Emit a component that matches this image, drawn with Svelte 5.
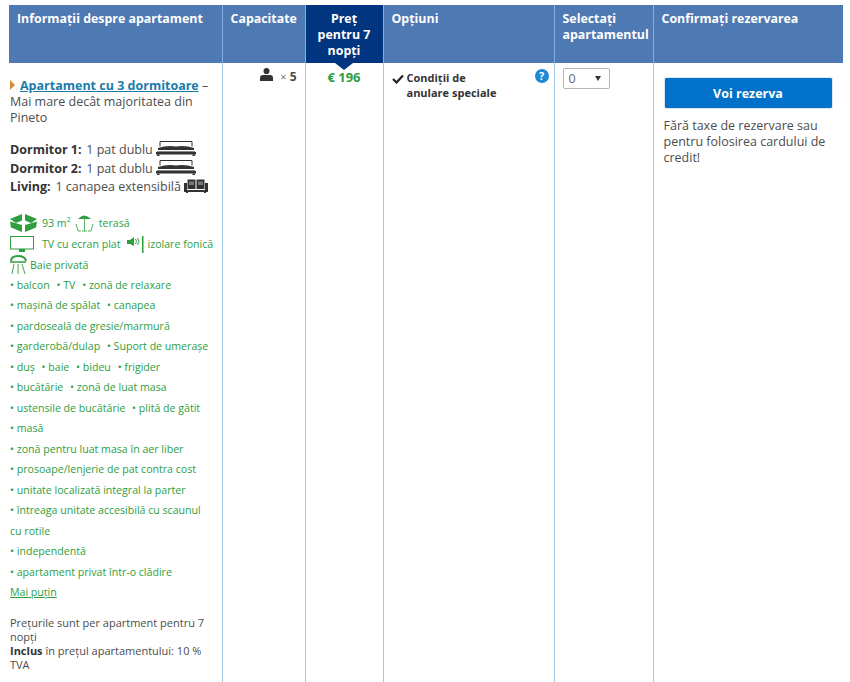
<script lang="ts">
    const headers = [
        { label: 'Informații despre apartament' },
        { label: 'Capacitate' },
        { label: 'Preț pentru 7 nopți', price: true },
        { label: 'Opțiuni' },
        { label: 'Selectați apartamentul' },
        { label: 'Confirmați rezervarea' },
    ];

    const facilities = [
        ['balcon', 'TV', 'zonă de relaxare'],
        ['mașină de spălat', 'canapea'],
        ['pardoseală de gresie/marmură'],
        ['garderobă/dulap', 'Suport de umerașe'],
        ['duș', 'baie', 'bideu', 'frigider'],
        ['bucătărie', 'zonă de luat masa'],
        ['ustensile de bucătărie', 'plită de gătit'],
        ['masă'],
        ['zonă pentru luat masa în aer liber'],
        ['prosoape/lenjerie de pat contra cost'],
        ['unitate localizată integral la parter'],
        ['întreaga unitate accesibilă cu scaunul cu rotile'],
        ['independentă'],
        ['apartament privat într-o clădire'],
    ];
</script>

{#snippet bed()}
    <svg class="bed" width="40" height="15" viewBox="0 0 40 15">
        <path d="M4 5.500v-5h32v5" fill="none" stroke="#333" />
        <path d="M2 7q9-3 18-1.500q9-1.500 18 1.500v2H2z" fill="#333" />
        <rect x="1" y="10" width="38" height="1" fill="#888" />
        <rect x="0" y="11" width="40" height="2.500" fill="#333" />
        <rect x="1" y="13.500" width="2.500" height="1.500" fill="#333" />
        <rect x="36.500" y="13.500" width="2.500" height="1.500" fill="#333" />
    </svg>
{/snippet}

<table class="rooms">
    <colgroup>
        <col style="width:213px" />
        <col style="width:83px" />
        <col style="width:78px" />
        <col style="width:171px" />
        <col style="width:99px" />
        <col style="width:190px" />
    </colgroup>
    <thead>
        <tr>
            {#each headers as h}
                <th class:price={h.price}>{h.label}</th>
            {/each}
        </tr>
    </thead>
    <tbody>
        <tr>
            <td class="info">
                <p class="title">
                    <span class="arrow"></span><a href="#apt" class="name">Apartament cu 3 dormitoare</a> –
                    Mai mare decât majoritatea din Pineto
                </p>
                <ul class="beds">
                    <li><b>Dormitor 1:</b> 1 pat dublu {@render bed()}</li>
                    <li><b>Dormitor 2:</b> 1 pat dublu {@render bed()}</li>
                    <li>
                        <b>Living:</b> 1 canapea extensibilă
                        <svg class="sofa" width="24" height="14" viewBox="0 0 24 14">
                            <path d="M0 4h3v7h18V4h3v9h-2v1h-2v-1H4v1H2v-1H0z" fill="#333" />
                            <path d="M3.500 0.500h8v9.500h-8zM12.500 0.500h8v9.500h-8z" fill="#333" />
                            <path d="M5 2.500h5v3.500H5zM14 2.500h5v3.500h-5z" fill="#777" />
                        </svg>
                    </li>
                </ul>
                <div class="green">
                    <div class="feat first">
                        <svg class="cube" width="27" height="18" viewBox="0 0 27 18">
                            <path d="M12 0v6.500L6 9 0 5zM15 0v6.500L21 9l6-4zM0 7.500l12 3.500v7L1 13.500zM27 7.500L15 11v7l11-4.500z" fill="#2e9e3f" />
                        </svg>
                        <span class="area">93 m<sup>2</sup></span>
                        <svg class="parasol" width="19" height="20" viewBox="0 0 19 20" fill="none" stroke="#2e9e3f">
                            <path d="M3 6q6-7 13 0z" fill="#2e9e3f" stroke="none" />
                            <path d="M9.500 5v13M1 11l2 7h3M18 11l-2 7h-3M7 18h5" stroke-width="0.800" />
                        </svg>
                        <span>terasă</span>
                    </div>
                    <div class="feat second">
                        <svg width="25" height="17" viewBox="0 0 25 17" fill="none" stroke="#2e9e3f">
                            <rect x="0.500" y="0.500" width="23" height="12.500" />
                            <path d="M9 14.500h6" stroke-width="3" />
                        </svg>
                        <span class="tv">TV cu ecran plat</span>
                        <svg width="18" height="17" viewBox="0 0 18 17">
                            <path d="M1 4h3l4-3v9L4 8H1z" fill="#2e9e3f" />
                            <path d="M9.500 3q2 2.500 0 5M11.500 2q3 3.500 0 7" stroke="#2e9e3f" fill="none" />
                            <rect x="16" y="0" width="1.500" height="17" fill="#2e9e3f" />
                        </svg>
                        <span class="quiet">izolare fonică</span>
                    </div>
                    <div class="feat third">
                        <svg width="17" height="19" viewBox="0 0 17 19" fill="none" stroke="#2e9e3f">
                            <path d="M1 6q0-5 7-5t8 5" stroke-width="2" />
                            <path d="M0 7h16" stroke-width="1.500" />
                            <path d="M4 9L2 19M8 9v10M12 9l3 10" stroke-width="0.900" />
                        </svg>
                        <span>Baie privată</span>
                    </div>
                    {#each facilities as line}
                        <p class="facility">
                            {#each line as item}
                                <span class="item">• {item}</span>{' '}
                            {/each}
                        </p>
                    {/each}
                    <p class="facility"><a href="#less" class="less">Mai puțin</a></p>
                </div>
                <p class="notes">
                    Prețurile sunt per apartment pentru 7 nopți<br />
                    <b>Inclus</b> în prețul apartamentului: 10 % TVA
                </p>
            </td>
            <td class="capacity">
                <svg width="13" height="13" viewBox="0 0 13 13">
                    <path d="M3.500 3a3 3 0 0 1 6 0q0 2-1.500 3h-3q-1.500-1-1.500-3z" fill="#333" />
                    <path d="M0 13v-3q0-3 3-3h7q3 0 3 3v3z" fill="#333" />
                </svg>
                <span class="times">×</span> <b>5</b>
            </td>
            <td class="amount">€ 196</td>
            <td class="options">
                <div class="cond">
                    <svg width="12" height="10" viewBox="0 0 12 10">
                        <path d="M1 5l3.500 3.500L11 1.500" fill="none" stroke="#222" stroke-width="2.200" />
                    </svg>
                    <b>Condiții de<br />anulare speciale</b>
                    <span class="help">?</span>
                </div>
            </td>
            <td class="select">
                <div class="dropdown"><span>0</span><i></i></div>
            </td>
            <td class="confirm">
                <button>Voi rezerva</button>
                <p>Fără taxe de rezervare sau pentru folosirea cardului de credit!</p>
            </td>
        </tr>
    </tbody>
</table>

<style>
    :global(body) {
        background: #fff;
        overflow: hidden;
    }

    .rooms {
        table-layout: fixed;
        width: 834px;
        margin: 5px 0 0 9px;
        border-collapse: collapse;
        font-family: "Open Sans", sans-serif;
        font-size: 12.500px;
        line-height: 16px;
        color: #4d4d4d;
    }

    th {
        height: 58px;
        box-sizing: border-box;
        padding: 6px 8px 4px;
        background: #4f79b3;
        border-left: 1px solid #7fb0e4;
        color: #fff;
        font-size: 12.400px;
        font-weight: 700;
        text-align: left;
        vertical-align: top;
    }

    th:first-child {
        border-left: 0;
    }

    th.price {
        position: relative;
        background: #023580;
        text-align: center;
    }

    th.price::after {
        content: "";
        position: absolute;
        left: 50%;
        bottom: -7px;
        margin-left: -9px;
        border: 9px solid transparent;
        border-bottom: 0;
        border-top: 7px solid #023580;
    }

    td {
        padding: 6px 8px;
        vertical-align: top;
        border-left: 1px solid #a3c8e6;
    }

    td.info {
        border-left: 0;
        padding: 15px 0 40px 1px;
    }

    p {
        margin: 0;
    }

    .title {
        width: 205px;
    }

    .arrow {
        display: inline-block;
        margin-right: 5px;
        border: 5px solid transparent;
        border-left: 5px solid #d98a3a;
        border-right: 0;
    }

    .name {
        color: #1a7bab;
        font-weight: 700;
    }

    .beds {
        list-style: none;
        margin: 15px 0 0;
        padding: 0;
    }

    .beds li {
        height: 18.500px;
        line-height: 18px;
        white-space: nowrap;
    }

    .beds b {
        color: #333;
        margin-right: 1.500px;
    }

    .bed {
        vertical-align: -2px;
    }

    .sofa {
        vertical-align: -2px;
    }

    .green {
        margin-top: 15px;
        color: #2e9e3f;
        font-size: 10.600px;
    }

    .feat {
        display: flex;
        align-items: center;
        white-space: nowrap;
    }

    .first {
        height: 22px;
        gap: 5px;
    }

    .parasol {
        margin-left: -1px;
    }

    .area sup {
        font-size: 7px;
        line-height: 0;
    }

    .second {
        height: 21px;
        gap: 5px;
    }

    .tv {
        margin-left: 2px;
    }

    .quiet {
        margin-left: -1px;
    }

    .third {
        height: 20px;
        gap: 3px;
    }

    .facility {
        line-height: 20.500px;
        width: 204px;
    }

    .item {
        margin-right: 4px;
    }

    .less {
        color: #2e9e3f;
    }

    .notes {
        margin-top: 13px;
        width: 205px;
        font-size: 11px;
        line-height: 14px;
    }

    .notes b {
        color: #333;
    }

    .capacity {
        text-align: right;
        padding: 5px 8px 0 0;
        font-size: 12px;
    }

    .capacity svg {
        vertical-align: 0;
    }

    .times {
        margin-left: 4px;
        color: #777;
        font-size: 11px;
    }

    .amount {
        text-align: center;
        padding-top: 6px;
        color: #2e9e3f;
        font-size: 13px;
        font-weight: 700;
    }

    .cond {
        position: relative;
        padding-left: 15px;
        font-size: 11px;
        line-height: 14.500px;
        color: #333;
        margin-right: 30px;
    }

    .options {
        padding-top: 8px;
    }

    .cond svg {
        position: absolute;
        left: 0;
        top: 3px;
    }

    .help {
        position: absolute;
        right: -33px;
        top: -2px;
        width: 14px;
        height: 14px;
        border-radius: 50%;
        background: #1d8ad2;
        color: #fff;
        font-size: 11px;
        font-weight: 700;
        line-height: 14px;
        text-align: center;
    }

    .select {
        padding: 5px 8px;
    }

    .dropdown {
        display: flex;
        align-items: center;
        justify-content: space-between;
        box-sizing: border-box;
        width: 47px;
        height: 21px;
        padding: 0 8px 0 5px;
        border: 1px solid #b5b5b5;
        border-radius: 2px;
        color: #666;
    }

    .dropdown i {
        border: 3.500px solid transparent;
        border-top: 5px solid #333;
        border-bottom: 0;
    }

    .confirm {
        padding: 15px 10px 0 10px;
    }

    button {
        display: block;
        width: 167px;
        height: 30px;
        margin-left: 1px;
        border: 0;
        border-radius: 1px;
        outline: 1px solid #dbe8f4;
        outline-offset: 0;
        background: #0271c9;
        color: #fff;
        font: 700 12.500px "Open Sans", sans-serif;
    }

    .confirm p {
        margin-top: 10px;
        line-height: 16px;
    }
</style>
